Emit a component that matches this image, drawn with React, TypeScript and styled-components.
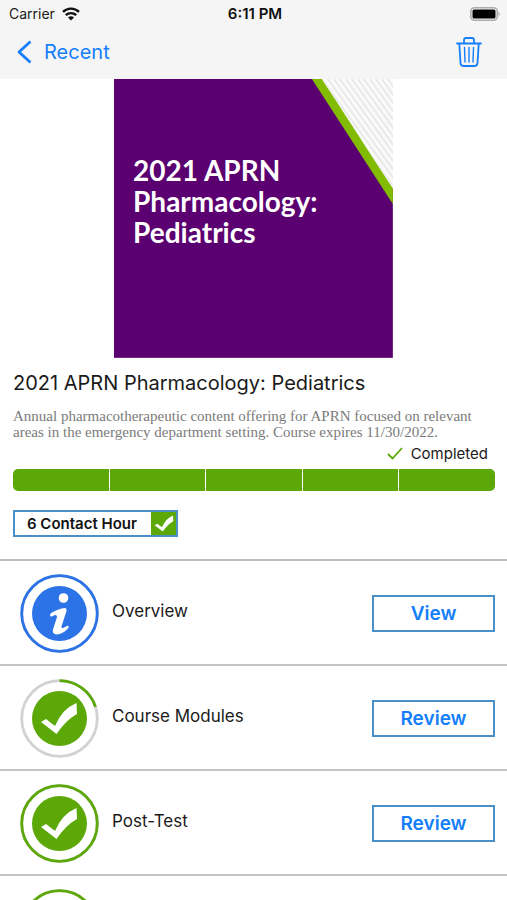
import React from "react";
import styled, { createGlobalStyle } from "styled-components";

const GREEN = "#5ca808";
const BLUE = "#2c73e8";
const LINK = "#147efb";
const FRAME = "#4a90c8";

const GlobalStyle = createGlobalStyle`
  * { box-sizing: border-box; }
  body {
    margin: 0;
    background: #fff;
    color: #1a1a1a;
    font-family: Inter, "Liberation Sans", sans-serif;
  }
  h1, h2, p, ul { margin: 0; padding: 0; }
  button { font-family: inherit; cursor: pointer; }
  svg { display: block; flex: none; }
`;

const Screen = styled.div`
  display: flex;
  flex-direction: column;
  height: 100vh;
  overflow: hidden;
`;

const TopBar = styled.header`
  flex: none;
  background: #f5f5f5;
`;

const StatusBar = styled.div`
  display: grid;
  grid-template-columns: 1fr auto 1fr;
  align-items: center;
  height: 27px;
  padding: 0 6px 0 9px;
  font-size: 14px;
`;

const Carrier = styled.div`
  display: flex;
  align-items: center;
  gap: 7px;
`;

const Clock = styled.time`
  font-size: 15px;
  font-weight: 600;
  color: #111;
`;

const BatterySlot = styled.div`
  justify-self: end;
`;

const NavBar = styled.nav`
  display: flex;
  align-items: center;
  justify-content: space-between;
  height: 52px;
  padding: 0 25px 2px 16px;
`;

const BackLink = styled.a`
  display: flex;
  align-items: center;
  gap: 12px;
  color: ${LINK};
  font-size: 20px;
  text-decoration: none;
`;

const IconButton = styled.button`
  padding: 0;
  border: 0;
  background: none;
`;

const Content = styled.main`
  flex: 1;
  min-height: 0;
  overflow: auto;
  scrollbar-width: none;
`;

const Poster = styled.div`
  display: grid;
  width: 55%;
  aspect-ratio: 1;
  margin: 0 auto;
  > * { grid-area: 1 / 1; }
`;

const PosterTitle = styled.h2`
  z-index: 1;
  padding: 76px 19px 0;
  color: #fff;
  font-family: Lato, sans-serif;
  font-size: 28px;
  font-weight: 700;
  line-height: 31px;
`;

const Summary = styled.section`
  padding: 11px 12px 22px 13px;
  border-bottom: 2px solid #bdbdbd;
`;

const Title = styled.h1`
  font-size: 20px;
  font-weight: 400;
  line-height: 28px;
`;

const Description = styled.p`
  max-width: 460px;
  margin-top: 11px;
  color: #7b7b7b;
  font-family: "Liberation Serif", serif;
  font-size: 15px;
  line-height: 16px;
`;

const Status = styled.p`
  display: flex;
  align-items: center;
  justify-content: flex-end;
  gap: 8px;
  margin-top: 4px;
  padding-right: 7px;
  font-size: 15px;
  line-height: 20px;
`;

const Progress = styled.div`
  display: grid;
  grid-auto-flow: column;
  grid-auto-columns: 1fr;
  gap: 1px;
  height: 22px;
  margin-top: 5px;
  border-radius: 5px;
  overflow: hidden;
`;

const Segment = styled.span`
  background: ${GREEN};
`;

const Hours = styled.div`
  display: inline-flex;
  height: 27px;
  margin-top: 19px;
  border: 2px solid ${FRAME};
  vertical-align: top;
  font-size: 15px;
  font-weight: 600;
  line-height: 23px;
`;

const HoursLabel = styled.span`
  padding: 0 14px 0 12px;
  color: #111;
`;

const HoursCheck = styled.span`
  display: flex;
  align-items: center;
  justify-content: center;
  width: 25px;
  background: ${GREEN};
`;

const StepList = styled.ul`
  list-style: none;
`;

const Step = styled.li`
  display: flex;
  align-items: center;
  height: 105px;
  padding: 2px 12px 0 20px;
  border-bottom: 2px solid #c4c4c4;
`;

const StepName = styled.span`
  flex: 1;
  padding: 0 13px 4px;
  font-size: 17px;
`;

const StepButton = styled.button`
  width: 123px;
  height: 37px;
  padding: 0;
  border: 2px solid ${FRAME};
  background: #fff;
  color: ${LINK};
  font-size: 19px;
  font-weight: 600;
`;

const CHECK = "M21 43L26 40L35 47Q42 30 56.500 24L57 35Q46 41 36.500 55Z";

function Wifi() {
  return (
    <svg width="18" height="14" viewBox="0 0 18 14" fill="none" stroke="#111" strokeWidth="2.400">
      <path d="M1 4.800C5.500 .5 12.500 .5 17 4.800M3.800 8.200C6.800 5.400 11.200 5.400 14.200 8.200" />
      <path d="M9 13.500L6 10.500Q9 8 12 10.500Z" fill="#111" stroke="none" />
    </svg>
  );
}

function Battery() {
  return (
    <svg width="31" height="14" viewBox="0 0 31 14">
      <rect x=".8" y=".8" width="26.400" height="12.400" rx="3.500" fill="#f5f5f5" stroke="#adadad" strokeWidth="1.600" />
      <rect x="2.500" y="2.500" width="23" height="9" rx="1.500" fill="#000" />
      <path d="M28.500 4.500Q31 7 28.500 9.500Z" fill="#adadad" />
    </svg>
  );
}

function Chevron() {
  return (
    <svg width="16" height="24" viewBox="0 0 16 24" fill="none" stroke={LINK} strokeWidth="2.800">
      <path d="M14.500 1.500L3 12L14.500 22.500" strokeLinejoin="round" />
    </svg>
  );
}

function Trash() {
  return (
    <svg width="26" height="30" viewBox="0 0 26 30" fill="none" stroke={LINK} strokeWidth="1.800" strokeLinecap="round" strokeLinejoin="round">
      <path d="M1 6.500H25M8 6V3Q8 1 10 1H16Q18 1 18 3V6" />
      <path d="M3.300 7L4.500 26Q4.700 29 7.500 29H18.500Q21.300 29 21.500 26L22.700 7" />
      <path d="M8.500 10.500L9 25M13 10.500V25M17.500 10.500L17 25" strokeWidth="1.400" />
    </svg>
  );
}

function Artwork() {
  const lines = Array.from({ length: 22 }, (_, i) => 190 + i * 6);
  return (
    <svg width="100%" height="100%" viewBox="0 0 279 279" preserveAspectRatio="none" aria-hidden="true">
      <rect width="279" height="279" fill="#5a0070" />
      <path d="M198 0H279V125Z" fill="#82bc00" />
      <clipPath id="corner"><path d="M208 0H280V111Z" /></clipPath>
      <g clipPath="url(#corner)">
        <rect x="200" width="80" height="115" fill="#fafafa" />
        {lines.map((x) => (
          <path key={x} d={`M${x - 90} -125l180 250`} stroke="#e9e9e9" strokeWidth="2" />
        ))}
      </g>
    </svg>
  );
}

type StepKind = "info" | "check";

function StepIcon({ kind, percent }: { kind: StepKind; percent: number }) {
  const color = kind === "info" ? BLUE : GREEN;
  return (
    <svg width="79" height="79" viewBox="0 0 79 79" aria-hidden="true">
      <circle cx="39.500" cy="39.500" r="37.800" fill="none" stroke="#d2d2d4" strokeWidth="2.800" />
      <circle
        cx="39.500" cy="39.500" r="37.800" fill="none" stroke={color} strokeWidth="2.800"
        pathLength={100} strokeDasharray={`${percent} ${100 - percent}`} transform="rotate(-90 39.500 39.500)"
      />
      <circle cx="39.500" cy="39.500" r="27.500" fill={color} />
      {kind === "info" ? (
        <g fill="#fff">
          <circle cx="43.500" cy="24" r="4.800" />
          <path d="M30 41.500Q30 39.500 32 38.500Q39 34.500 44.500 34Q47 34 46.500 37L41.500 52.500Q41 54.500 43 54L47.500 51.800Q49.500 52 48 54.500Q43 60 36.500 60.500Q32 60 33 55.500L37 43Q37.300 41 35 41L31.500 42.500Q30.200 42.800 30 41.500Z" />
        </g>
      ) : (
        <path d={CHECK} fill="#fff" />
      )}
    </svg>
  );
}

const steps: { name: string; action: string; kind: StepKind; percent: number }[] = [
  { name: "Overview", action: "View", kind: "info", percent: 100 },
  { name: "Course Modules", action: "Review", kind: "check", percent: 20 },
  { name: "Post-Test", action: "Review", kind: "check", percent: 100 },
  { name: "", action: "", kind: "check", percent: 100 },
];

export default function App() {
  return (
    <Screen>
      <GlobalStyle />
      <TopBar>
        <StatusBar>
          <Carrier>Carrier <Wifi /></Carrier>
          <Clock>6:11 PM</Clock>
          <BatterySlot><Battery /></BatterySlot>
        </StatusBar>
        <NavBar>
          <BackLink href="#recent"><Chevron />Recent</BackLink>
          <IconButton type="button" aria-label="Delete"><Trash /></IconButton>
        </NavBar>
      </TopBar>
      <Content>
        <Poster>
          <Artwork />
          <PosterTitle>2021 APRN Pharmacology: Pediatrics</PosterTitle>
        </Poster>
        <Summary>
          <Title>2021 APRN Pharmacology: Pediatrics</Title>
          <Description>
            Annual pharmacotherapeutic content offering for APRN focused on relevant areas in the
            emergency department setting. Course expires 11/30/2022.
          </Description>
          <Status>
            <svg width="16" height="13" viewBox="0 0 16 13" fill="none" stroke={GREEN} strokeWidth="1.800">
              <path d="M1 7L5.500 11.500L15 1" />
            </svg>
            Completed
          </Status>
          <Progress role="progressbar" aria-label="Course progress" aria-valuenow={100}>
            {[1, 2, 3, 4, 5].map((n) => <Segment key={n} />)}
          </Progress>
          <Hours>
            <HoursLabel>6 Contact Hour</HoursLabel>
            <HoursCheck>
              <svg width="20" height="17" viewBox="20 23 38 33" aria-hidden="true">
                <path d={CHECK} fill="#fff" />
              </svg>
            </HoursCheck>
          </Hours>
        </Summary>
        <StepList>
          {steps.map((step, i) => (
            <Step key={i}>
              <StepIcon kind={step.kind} percent={step.percent} />
              <StepName>{step.name}</StepName>
              {step.action && <StepButton type="button">{step.action}</StepButton>}
            </Step>
          ))}
        </StepList>
      </Content>
    </Screen>
  );
}
